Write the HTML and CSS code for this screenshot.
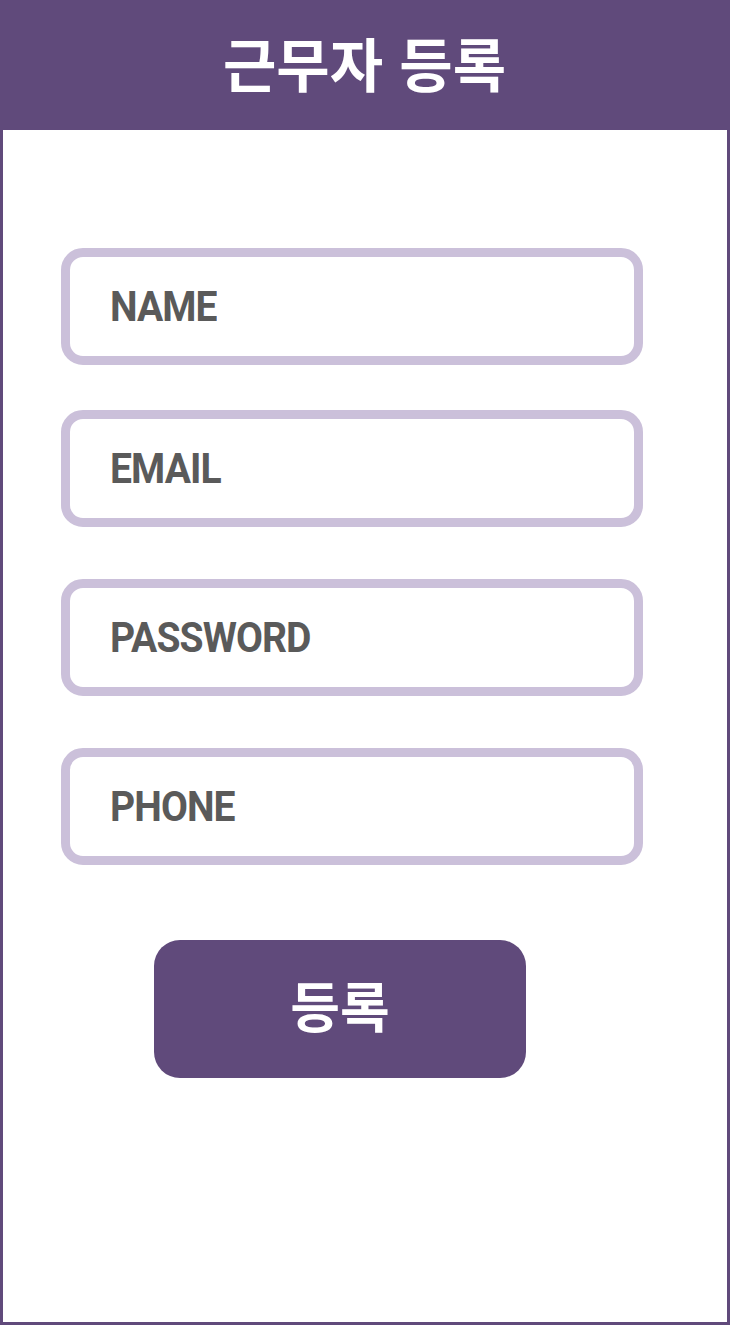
FILE: index.html
```html
<!DOCTYPE html>
<html lang="ko">
<head>
<meta charset="utf-8">
<title>근무자 등록</title>
<link rel="stylesheet" href="styles.css">
</head>
<body>
<div class="app">
  <header class="header">
    <h1 class="title">근무자 등록</h1>
  </header>
  <main class="form">
    <div class="field field-first"><span class="label">NAME</span></div>
    <div class="field field-gap-sm"><span class="label">EMAIL</span></div>
    <div class="field"><span class="label">PASSWORD</span></div>
    <div class="field"><span class="label">PHONE</span></div>
    <button class="submit" type="button">등록</button>
  </main>
</div>
</body>
</html>
```

FILE: styles.css
```css
* {
  box-sizing: border-box;
}

html, body {
  margin: 0;
  padding: 0;
  background: #ffffff;
}

.app {
  width: 730px;
  height: 1325px;
  border: 3px solid #604a7b;
  border-top: 0;
  display: flex;
  flex-direction: column;
  font-family: "Noto Sans CJK KR", "Noto Sans", sans-serif;
}

.header {
  height: 130px;
  margin: 0 -3px;
  background: #604a7b;
  display: flex;
  align-items: center;
  justify-content: center;
  padding-bottom: 6px;
}

.title {
  margin: 0;
  color: #ffffff;
  font-size: 58px;
  font-weight: 700;
  line-height: 1;
  padding-right: 1px;
}

.form {
  display: flex;
  flex-direction: column;
  align-items: flex-start;
  padding-left: 58px;
}

.field {
  width: 582px;
  height: 117px;
  border: 9px solid #cbc0da;
  border-radius: 22px;
  display: flex;
  align-items: center;
  padding-left: 40px;
  margin-top: 52px;
}

.field-first {
  margin-top: 118px;
}

.field-gap-sm {
  margin-top: 45px;
}

.label {
  display: inline-block;
  font-family: Roboto, "Noto Sans", sans-serif;
  font-weight: 700;
  font-size: 42px;
  letter-spacing: -1px;
  color: #5a5a5a;
  transform: scaleX(0.93);
  transform-origin: left center;
}

.submit {
  margin-top: 75px;
  margin-left: 93px;
  width: 372px;
  height: 138px;
  border: 0;
  border-radius: 26px;
  background: #604a7b;
  color: #ffffff;
  font-family: "Noto Sans CJK KR", "Noto Sans", sans-serif;
  font-size: 54px;
  font-weight: 700;
  line-height: 1;
  padding: 0 0 8px 0;
}
```
